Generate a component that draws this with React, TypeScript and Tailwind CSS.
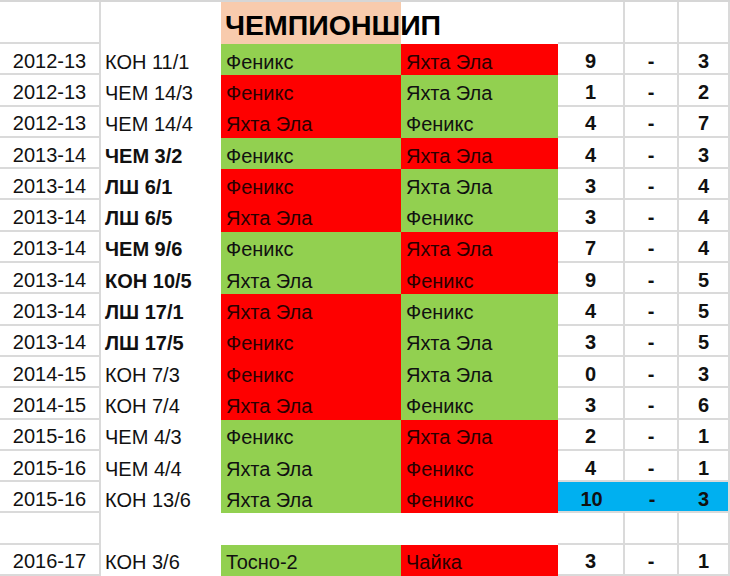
import React from "react";

type Row = {
    season: string;
    match: string;
    bold?: boolean;
    home: string;
    away: string;
    homeWin: boolean; // home cell green, away red
    a: string;
    b: string;
    blue?: boolean;
};

const rows: (Row | null)[] = [
    { season: "2012-13", match: "КОН 11/1", home: "Феникс", away: "Яхта Эла", homeWin: true, a: "9", b: "3" },
    { season: "2012-13", match: "ЧЕМ 14/3", home: "Феникс", away: "Яхта Эла", homeWin: false, a: "1", b: "2" },
    { season: "2012-13", match: "ЧЕМ 14/4", home: "Яхта Эла", away: "Феникс", homeWin: false, a: "4", b: "7" },
    { season: "2013-14", match: "ЧЕМ 3/2", bold: true, home: "Феникс", away: "Яхта Эла", homeWin: true, a: "4", b: "3" },
    { season: "2013-14", match: "ЛШ 6/1", bold: true, home: "Феникс", away: "Яхта Эла", homeWin: false, a: "3", b: "4" },
    { season: "2013-14", match: "ЛШ 6/5", bold: true, home: "Яхта Эла", away: "Феникс", homeWin: false, a: "3", b: "4" },
    { season: "2013-14", match: "ЧЕМ 9/6", bold: true, home: "Феникс", away: "Яхта Эла", homeWin: true, a: "7", b: "4" },
    { season: "2013-14", match: "КОН 10/5", bold: true, home: "Яхта Эла", away: "Феникс", homeWin: true, a: "9", b: "5" },
    { season: "2013-14", match: "ЛШ 17/1", bold: true, home: "Яхта Эла", away: "Феникс", homeWin: false, a: "4", b: "5" },
    { season: "2013-14", match: "ЛШ 17/5", bold: true, home: "Феникс", away: "Яхта Эла", homeWin: false, a: "3", b: "5" },
    { season: "2014-15", match: "КОН 7/3", home: "Феникс", away: "Яхта Эла", homeWin: false, a: "0", b: "3" },
    { season: "2014-15", match: "КОН 7/4", home: "Яхта Эла", away: "Феникс", homeWin: false, a: "3", b: "6" },
    { season: "2015-16", match: "ЧЕМ 4/3", home: "Феникс", away: "Яхта Эла", homeWin: true, a: "2", b: "1" },
    { season: "2015-16", match: "ЧЕМ 4/4", home: "Яхта Эла", away: "Феникс", homeWin: true, a: "4", b: "1" },
    { season: "2015-16", match: "КОН 13/6", home: "Яхта Эла", away: "Феникс", homeWin: true, a: "10", b: "3", blue: true },
    null,
    { season: "2016-17", match: "КОН 3/6", home: "Тосно-2", away: "Чайка", homeWin: true, a: "3", b: "1" },
];

const grid = "border-r-2 border-b-2 border-[#dadada]";
const cell = "flex items-center pt-1 h-[31.3px]";

export default function App() {
    return (
        <div className="w-[730px] h-[576px] overflow-hidden bg-white border-t-2 border-[#d6d6d6] text-[20px] text-[#111] font-['Liberation_Sans',Arial,sans-serif]">
            <div className="grid grid-cols-[101px_120px_180px_157px_67px_54px_51px]">
                {/* header */}
                <div className={`h-[42px] ${grid}`} />
                <div className="h-[42px]" />
                <div className="h-[42px] bg-[#f8cbad] relative">
                    <span className="absolute left-[4px] top-[5px] whitespace-nowrap text-[28.5px] font-bold text-black leading-none pt-[4px]">
                        ЧЕМПИОНШИП
                    </span>
                </div>
                <div className="h-[42px]" />
                <div className={`h-[42px] ${grid}`} />
                <div className={`h-[42px] ${grid}`} />
                <div className={`h-[42px] ${grid}`} />

                {rows.map((r, i) =>
                    r ? (
                        <React.Fragment key={i}>
                            <div className={`${cell} ${grid} justify-center`}>{r.season}</div>
                            <div className={`${cell} pl-[4px] ${r.bold ? "font-bold" : ""}`}>{r.match}</div>
                            <div className={`${cell} pl-[5px] ${r.homeWin ? "bg-[#92d050]" : "bg-[#fe0000] text-[#2a0000]"}`}>{r.home}</div>
                            <div className={`${cell} pl-[5px] ${r.homeWin ? "bg-[#fe0000] text-[#2a0000]" : "bg-[#92d050]"}`}>{r.away}</div>
                            <div className={`${cell} justify-center font-bold ${r.blue ? "bg-[#00b0f0] border-b-2 border-[#dadada]" : grid}`}>{r.a}</div>
                            <div className={`${cell} justify-center font-bold ${r.blue ? "bg-[#00b0f0] border-b-2 border-[#dadada]" : grid}`}>-</div>
                            <div className={`${cell} justify-center font-bold ${r.blue ? "bg-[#00b0f0] border-b-2 border-r-2 border-[#dadada]" : grid}`}>{r.b}</div>
                        </React.Fragment>
                    ) : (
                        <React.Fragment key={i}>
                            <div className={`${cell} ${grid}`} />
                            <div className={cell} />
                            <div className={cell} />
                            <div className={cell} />
                            <div className={`${cell} ${grid}`} />
                            <div className={`${cell} ${grid}`} />
                            <div className={`${cell} ${grid}`} />
                        </React.Fragment>
                    )
                )}
            </div>
        </div>
    );
}
